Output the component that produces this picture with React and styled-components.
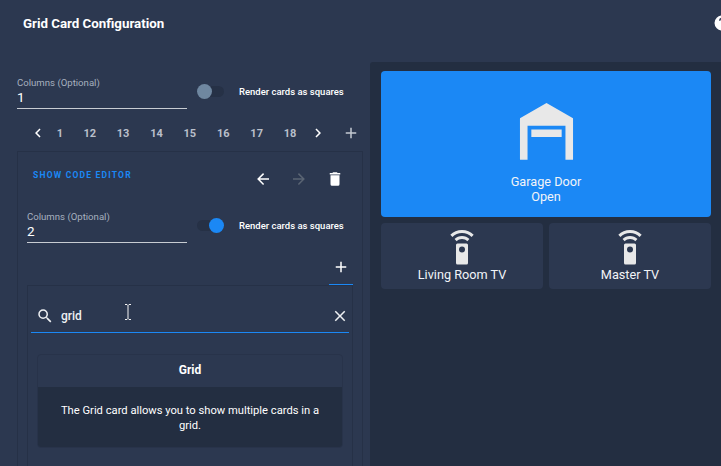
import React from "react";
import styled, { createGlobalStyle } from "styled-components";

const Global = createGlobalStyle`
  html, body { margin: 0; padding: 0; background: #2c3850; }
  body { font-family: Roboto, "Liberation Sans", sans-serif; color: #fff; }
`;

const P = {
  help: "M15.07,11.25L14.17,12.17C13.45,12.89 13,13.5 13,15H11V14.5C11,13.39 11.45,12.39 12.17,11.67L13.41,10.41C13.78,10.05 14,9.55 14,9C14,7.89 13.1,7 12,7A2,2 0 0,0 10,9H8A4,4 0 0,1 12,5A4,4 0 0,1 16,9C16,9.88 15.64,10.67 15.07,11.25M13,19H11V17H13M12,2A10,10 0 0,0 2,12A10,10 0 0,0 12,22A10,10 0 0,0 22,12C22,6.47 17.5,2 12,2Z",
  left: "M15.41,16.58L10.83,12L15.41,7.41L14,6L8,12L14,18L15.41,16.58Z",
  right: "M8.59,16.58L13.17,12L8.59,7.41L10,6L16,12L10,18L8.59,16.58Z",
  plus: "M19,13H13V19H11V13H5V11H11V5H13V11H19V13Z",
  back: "M20,11V13H8L13.5,18.5L12.08,19.92L4.16,12L12.08,4.08L13.5,5.5L8,11H20Z",
  forward: "M4,11V13H16L10.5,18.5L11.92,19.92L19.84,12L11.92,4.08L10.5,5.5L16,11H4Z",
  trash: "M19,4H15.5L14.5,3H9.5L8.5,4H5V6H19M6,19A2,2 0 0,0 8,21H16A2,2 0 0,0 18,19V7H6V19Z",
  search: "M9.5,3A6.5,6.5 0 0,1 16,9.5C16,11.11 15.41,12.59 14.44,13.73L14.71,14H15.5L20.5,19L19,20.5L14,15.5V14.71L13.73,14.44C12.59,15.41 11.11,16 9.5,16A6.5,6.5 0 0,1 3,9.5A6.5,6.5 0 0,1 9.5,3M9.5,5C7,5 5,7 5,9.5C5,12 7,14 9.5,14C12,14 14,12 14,9.5C14,7 12,5 9.5,5Z",
  close: "M19,6.41L17.59,5L12,10.59L6.41,5L5,6.41L10.59,12L5,17.59L6.41,19L12,13.41L17.59,19L19,17.59L13.41,12L19,6.41Z",
  garage: "M19,20H17V11H7V20H5V9L12,5L19,9V20M8,12H16V14H8V12Z",
  remote: "M12,0C8.96,0 6.21,1.23 4.22,3.22L5.63,4.63C7.26,3 9.5,2 12,2C14.5,2 16.74,3 18.37,4.63L19.78,3.22C17.79,1.23 15.04,0 12,0M7.05,6.05L8.46,7.46C9.37,6.56 10.62,6 12,6C13.38,6 14.63,6.56 15.54,7.46L16.95,6.05C15.68,4.78 13.93,4 12,4C10.07,4 8.32,4.78 7.05,6.05M12,15A2,2 0 0,1 10,13A2,2 0 0,1 12,11A2,2 0 0,1 14,13A2,2 0 0,1 12,15M15,9H9A1,1 0 0,0 8,10V22A1,1 0 0,0 9,23H15A1,1 0 0,0 16,22V10A1,1 0 0,0 15,9Z",
};

const Svg = styled.svg`
  display: block;
  flex: none;
  fill: currentColor;
`;
const Icon = ({ d, size = 18, ...rest }) => (
  <Svg viewBox="0 0 24 24" width={size} height={size} {...rest}><path d={d} /></Svg>
);

const Page = styled.div`
  position: relative;
  width: 721px;
  height: 466px;
  overflow: hidden;
  background: #2c3850;
`;
const Header = styled.header`
  height: 62px;
  box-sizing: border-box;
  padding: 15px 0 0 23px;
  display: flex;
  justify-content: space-between;
  align-items: flex-start;
`;
const Title = styled.h1`
  margin: 0;
  font-size: 13.3px;
  line-height: 18px;
  font-weight: 700;
`;
const HelpIcon = styled(Icon)`
  margin: -1px -10px 0 0;
  color: #fff;
`;
const Body = styled.main`
  display: flex;
  height: 404px;
`;
const Editor = styled.section`
  width: 370px;
  flex: none;
  box-sizing: border-box;
  padding: 13px 7px 0 17px;
`;
const ConfigRow = styled.div`
  display: flex;
  align-items: center;
  height: 34px;
`;
const Field = styled.div`
  width: ${(p) => p.$width}px;
  height: 34px;
  box-sizing: border-box;
  padding-top: 1px;
  border-bottom: 1px solid #c8ccd2;
  flex: none;
`;
const FieldLabel = styled.div`
  font-size: 9.6px;
  line-height: 13px;
  color: #a6b0bf;
`;
const FieldValue = styled.div`
  font-size: 13.5px;
  line-height: 17px;
`;
const Switch = styled.div`
  position: relative;
  width: 27px;
  height: 11px;
  border-radius: 6px;
  margin: -2px 15px 0 10px;
  background: #263146;
  flex: none;
`;
const Thumb = styled.div`
  position: absolute;
  top: -2px;
  left: ${(p) => (p.$on ? "12px" : "0")};
  width: 15px;
  height: 15px;
  border-radius: 50%;
  background: ${(p) => (p.$on ? "#1b88f5" : "#6f87a0")};
`;
const SwitchLabel = styled.span`
  font-size: 9.5px;
  font-weight: 500;
  margin-top: -2px;
  white-space: nowrap;
`;
const Tabs = styled.nav`
  display: flex;
  align-items: center;
  height: 30px;
  margin-top: 9px;
  padding-left: 12px;
  color: #b9bfca;
`;
const NavIcon = styled(Icon)`
  color: ${(p) => p.$color || "#fff"};
`;
const Tab = styled.span`
  width: 33.4px;
  text-align: center;
  font-size: 11px;
  font-weight: 700;
  flex: none;
`;
const FirstTab = styled(Tab)`
  width: 26px;
`;
const TabEnd = styled.div`
  margin-left: ${(p) => p.$gap}px;
  display: flex;
`;
const CardBox = styled.section`
  margin-top: 3px;
  height: 331px;
  box-sizing: border-box;
  border: 1px solid #263147;
  border-bottom: 0;
  padding: 0 9px;
`;
const BoxTop = styled.div`
  display: flex;
  justify-content: space-between;
  align-items: flex-start;
  height: 57px;
  padding: 17px 0 0 6px;
  box-sizing: border-box;
`;
const CodeLink = styled.span`
  color: #1b88f5;
  font-size: 8.5px;
  font-weight: 700;
  line-height: 12px;
  letter-spacing: 1.2px;
`;
const Actions = styled.div`
  display: flex;
  gap: 18px;
  margin: 1px 9px 0 0;
`;
const AddRow = styled.div`
  display: flex;
  justify-content: flex-end;
  height: 42px;
`;
const AddTab = styled.div`
  width: 24px;
  height: 42px;
  box-sizing: border-box;
  padding-top: 15px;
  display: flex;
  justify-content: center;
  border-bottom: 1px solid #1b88f5;
  color: #fff;
`;
const Picker = styled.section`
  border: 1px solid #263147;
  border-bottom: 0;
  height: 190px;
  box-sizing: border-box;
  padding: 0 3px;
`;
const Search = styled.div`
  display: flex;
  align-items: center;
  height: 47px;
  box-sizing: border-box;
  padding: 13px 0 0 4px;
  border-bottom: 1px solid #1b88f5;
  color: #eef0f3;
  font-size: 12px;
  font-weight: 500;
`;
const SearchIcon = styled(Icon)`
  margin-left: 1px;
`;
const SearchText = styled.span`
  flex: 1;
  margin-left: 7px;
`;
const ResultCard = styled.article`
  margin: 21px 6px 0;
  border-radius: 4px;
  overflow: hidden;
  background: #2c3850;
  border: 1px solid #28334a;
`;
const ResultTitle = styled.div`
  height: 32px;
  line-height: 31px;
  text-align: center;
  font-size: 12px;
  font-weight: 700;
`;
const ResultText = styled.div`
  background: #232e41;
  height: 60px;
  box-sizing: border-box;
  padding: 16px 20px 0;
  text-align: center;
  font-size: 11.2px;
  line-height: 15px;
  font-weight: 400;
  color: #fff;
`;
const Cursor = styled.svg`
  position: absolute;
  left: 124px;
  top: 304px;
  width: 8px;
  height: 16px;
  fill: none;
  stroke: #f4f4f4;
  stroke-width: 1;
`;
const Preview = styled.aside`
  flex: 1;
  background: #232e41;
  border-top-left-radius: 3px;
  padding: 9px 10px 0 11px;
  display: grid;
  grid-template-columns: 162px 162px;
  grid-template-rows: 146px 66px;
  gap: 6px;
  align-content: start;
`;
const EntityCard = styled.div`
  background: ${(p) => (p.$active ? "#1b88f5" : "#2c3850")};
  border-radius: 4px;
  display: flex;
  flex-direction: column;
  align-items: center;
  grid-column: ${(p) => (p.$wide ? "1 / -1" : "auto")};
  padding-top: ${(p) => p.$top}px;
  box-sizing: border-box;
  font-size: 12.7px;
  line-height: 15px;
  color: #f2f4f8;
  text-align: center;
`;
const EntityIcon = styled(Icon)`
  color: #e8e8e8;
`;
const EntityName = styled.div`
  margin-top: ${(p) => p.$gap}px;
`;

export default function App() {
  return (
    <Page>
      <Global />
      <Header>
        <Title>Grid Card Configuration</Title>
        <HelpIcon d={P.help} size={18} />
      </Header>
      <Body>
        <Editor>
          <ConfigRow>
            <Field $width={170}>
              <FieldLabel>Columns (Optional)</FieldLabel>
              <FieldValue>1</FieldValue>
            </Field>
            <Switch><Thumb /></Switch>
            <SwitchLabel>Render cards as squares</SwitchLabel>
          </ConfigRow>
          <Tabs>
            <NavIcon d={P.left} />
            <FirstTab>1</FirstTab>
            {[12, 13, 14, 15, 16, 17, 18].map((n) => <Tab key={n}>{n}</Tab>)}
            <TabEnd $gap={2}><NavIcon d={P.right} /></TabEnd>
            <TabEnd $gap={15}><NavIcon d={P.plus} $color="#c4c9d1" /></TabEnd>
          </Tabs>
          <CardBox>
            <BoxTop>
              <CodeLink>SHOW CODE EDITOR</CodeLink>
              <Actions>
                <NavIcon d={P.back} />
                <NavIcon d={P.forward} $color="#5a6473" />
                <NavIcon d={P.trash} />
              </Actions>
            </BoxTop>
            <ConfigRow>
              <Field $width={160}>
                <FieldLabel>Columns (Optional)</FieldLabel>
                <FieldValue>2</FieldValue>
              </Field>
              <Switch><Thumb $on /></Switch>
              <SwitchLabel>Render cards as squares</SwitchLabel>
            </ConfigRow>
            <AddRow>
              <AddTab><Icon d={P.plus} /></AddTab>
            </AddRow>
            <Picker>
              <Search>
                <SearchIcon d={P.search} size={18} />
                <SearchText>grid</SearchText>
                <Icon d={P.close} />
              </Search>
              <ResultCard>
                <ResultTitle>Grid</ResultTitle>
                <ResultText>The Grid card allows you to show multiple cards in a grid.</ResultText>
              </ResultCard>
            </Picker>
          </CardBox>
        </Editor>
        <Preview>
          <EntityCard $active $wide $top={13}>
            <EntityIcon d={P.garage} size={91} />
            <EntityName $gap={-1}>Garage Door<br />Open</EntityName>
          </EntityCard>
          <EntityCard $top={7}>
            <EntityIcon d={P.remote} size={36} />
            <EntityName $gap={1}>Living Room TV</EntityName>
          </EntityCard>
          <EntityCard $top={7}>
            <EntityIcon d={P.remote} size={36} />
            <EntityName $gap={1}>Master TV</EntityName>
          </EntityCard>
        </Preview>
      </Body>
      <Cursor viewBox="0 0 8 16"><path d="M1 .5h2l1 1 1-1h2M4 1.5v13M1 15.5h2l1-1 1 1h2" /></Cursor>
    </Page>
  );
}
